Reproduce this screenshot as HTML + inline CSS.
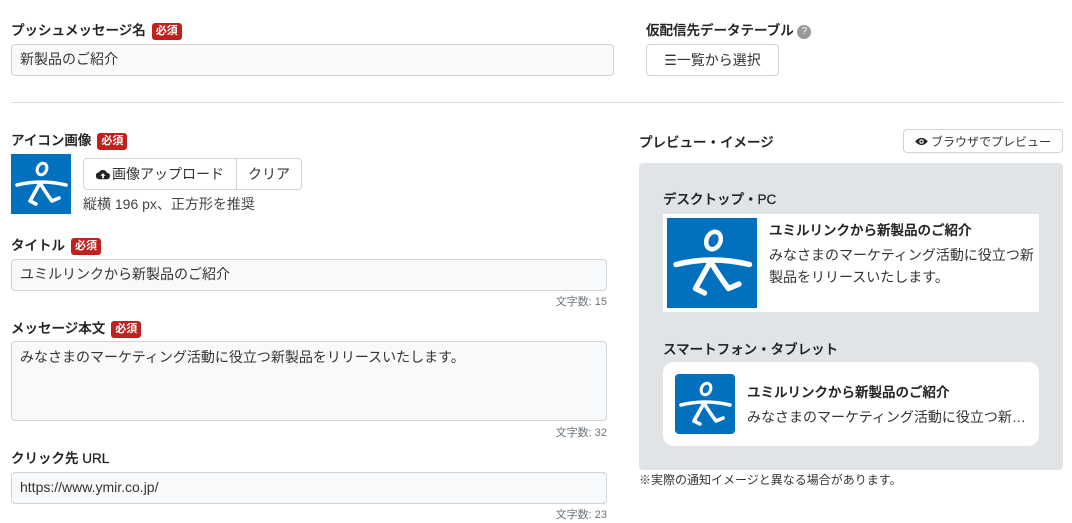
<!DOCTYPE html>
<html><head><meta charset="utf-8">
<style>
*{box-sizing:border-box;margin:0;padding:0}
body{width:1072px;height:523px;background:#fff;font-family:"Liberation Sans","Noto Sans CJK JP",sans-serif;color:#212529;position:relative;overflow:hidden;font-size:14px}
.a{position:absolute;white-space:nowrap}
.lbl{font-size:13.5px;font-weight:500;color:#222;-webkit-text-stroke:0.25px #222}
.req{display:inline-block;background:#c0211f;color:#fff;font-size:11px;font-weight:bold;padding:1px 4px;border-radius:3px;margin-left:6px;vertical-align:1px;line-height:15px;-webkit-text-stroke:0}
.inp{position:absolute;background:#f8f9fa;border:1px solid #ced4da;border-radius:4px;padding:0 8px;font-size:14px;line-height:29px;color:#333}
.cnt{position:absolute;font-size:11px;color:#6c757d;text-align:right}
.btn{position:absolute;border:1px solid #ced4da;border-radius:4px;background:#fff;font-size:14px;color:#333;display:flex;align-items:center;justify-content:center}
.t{font-size:13.5px;font-weight:500;-webkit-text-stroke:0.3px #222;color:#222}
</style></head><body>
<svg width="0" height="0" style="position:absolute"><defs>
<symbol id="logo" viewBox="0 0 60 60"><rect width="60" height="60" fill="#0070bf"/>
<ellipse cx="31" cy="15" rx="4.6" ry="6" transform="rotate(25 31 15)" fill="none" stroke="#fff" stroke-width="3"/>
<path d="M6 31 Q30 25 55 31" stroke="#fff" stroke-width="3.6" fill="none" stroke-linecap="round"/>
<path d="M29 29 L19 47 L25 50 M29 29 Q35 39 41 47 L48 44" stroke="#fff" stroke-width="3.6" fill="none" stroke-linecap="round" stroke-linejoin="round"/>
</symbol></defs></svg>

<div class="a lbl" style="left:11px;top:19px">プッシュメッセージ名<span class="req">必須</span></div>
<div class="inp" style="left:11px;top:44px;width:603px;height:32px">新製品のご紹介</div>
<div class="a lbl" style="left:646px;top:19px">仮配信先データテーブル <span style="display:inline-block;width:14px;height:14px;border-radius:50%;background:#999;color:#fff;font-size:10px;text-align:center;line-height:14px;vertical-align:1px;-webkit-text-stroke:0">?</span></div>
<div class="btn" style="left:646px;top:44px;width:133px;height:32px">☰一覧から選択</div>

<div class="a" style="left:11px;top:102px;width:1052px;height:1px;background:#dcdcdc"></div>

<div class="a lbl" style="left:11px;top:129px">アイコン画像<span class="req">必須</span></div>
<svg class="a" style="left:11px;top:154px" width="60" height="60"><use href="#logo"/></svg>
<div class="btn" style="left:83px;top:158px;width:154px;height:32px;border-radius:4px 0 0 4px">
<svg width="14" height="12" viewBox="0 0 16 12" style="margin-right:2px"><path d="M4 12 A4 4 0 0 1 3.5 4 A5 5 0 0 1 12.5 4.5 A3.7 3.7 0 0 1 12 12 Z" fill="#222"/><path d="M8 5 L5 8 H7 V11 H9 V8 H11 Z" fill="#fff"/></svg>画像アップロード</div>
<div class="btn" style="left:236px;top:158px;width:66px;height:32px;border-radius:0 4px 4px 0">クリア</div>
<div class="a" style="left:83px;top:194px;font-size:14px;color:#444">縦横 196 px、正方形を推奨</div>

<div class="a lbl" style="left:11px;top:234px">タイトル<span class="req">必須</span></div>
<div class="inp" style="left:11px;top:259px;width:596px;height:32px">ユミルリンクから新製品のご紹介</div>
<div class="cnt" style="left:450px;top:293px;width:157px">文字数: 15</div>

<div class="a lbl" style="left:11px;top:317px">メッセージ本文<span class="req">必須</span></div>
<div class="inp" style="left:11px;top:341px;width:596px;height:80px;line-height:20px;padding-top:5px">みなさまのマーケティング活動に役立つ新製品をリリースいたします。</div>
<div class="cnt" style="left:450px;top:424px;width:157px">文字数: 32</div>

<div class="a lbl" style="left:11px;top:447px">クリック先 URL</div>
<div class="inp" style="left:11px;top:472px;width:596px;height:32px">https://www.ymir.co.jp/</div>
<div class="cnt" style="left:450px;top:506px;width:157px">文字数: 23</div>

<div class="a lbl" style="left:639px;top:131px">プレビュー・イメージ</div>
<div class="btn" style="left:903px;top:129px;width:160px;height:24px;font-size:12px">
<svg width="13" height="9" viewBox="0 0 14 10" style="margin-right:3px"><path d="M0 5 Q7 -3 14 5 Q7 13 0 5Z" fill="#222"/><circle cx="7" cy="5" r="2.5" fill="#fff"/><circle cx="7" cy="5" r="1.3" fill="#222"/></svg>ブラウザでプレビュー</div>
<div class="a" style="left:639px;top:163px;width:424px;height:307px;background:#e1e4e7;border-radius:4px"></div>
<div class="a lbl" style="left:663px;top:188px">デスクトップ・PC</div>
<div class="a" style="left:663px;top:214px;width:376px;height:98px;background:#fff"></div>
<svg class="a" style="left:667px;top:218px" width="90" height="90"><use href="#logo"/></svg>
<div class="a t" style="left:769px;top:219px">ユミルリンクから新製品のご紹介</div>
<div class="a" style="left:769px;top:244px;font-size:14px;line-height:22px;color:#333;white-space:normal;width:265px">みなさまのマーケティング活動に役立つ新製品をリリースいたします。</div>

<div class="a lbl" style="left:663px;top:338px">スマートフォン・タブレット</div>
<div class="a" style="left:663px;top:362px;width:376px;height:84px;background:#fff;border-radius:11px"></div>
<svg class="a" style="left:675px;top:374px;border-radius:4px" width="60" height="60"><use href="#logo"/></svg>
<div class="a t" style="left:747px;top:381px">ユミルリンクから新製品のご紹介</div>
<div class="a" style="left:747px;top:407px;font-size:14px;color:#333">みなさまのマーケティング活動に役立つ新…</div>

<div class="a" style="left:639px;top:471px;font-size:12px;color:#333">※実際の通知イメージと異なる場合があります。</div>
</body></html>
